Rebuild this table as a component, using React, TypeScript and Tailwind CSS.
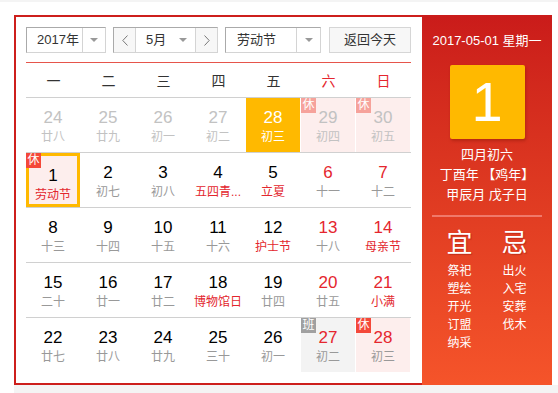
type Day = {
  d: number
  l: string
  muted?: boolean
  fest?: boolean
  tag?: '休' | '班'
  sel?: boolean
  today?: boolean
}

const weeks: Day[][] = [
  [
    { d: 24, l: '廿八', muted: true },
    { d: 25, l: '廿九', muted: true },
    { d: 26, l: '初一', muted: true },
    { d: 27, l: '初二', muted: true },
    { d: 28, l: '初三', sel: true },
    { d: 29, l: '初四', muted: true, tag: '休' },
    { d: 30, l: '初五', muted: true, tag: '休' },
  ],
  [
    { d: 1, l: '劳动节', fest: true, tag: '休', today: true },
    { d: 2, l: '初七' },
    { d: 3, l: '初八' },
    { d: 4, l: '五四青...', fest: true },
    { d: 5, l: '立夏', fest: true },
    { d: 6, l: '十一' },
    { d: 7, l: '十二' },
  ],
  [
    { d: 8, l: '十三' },
    { d: 9, l: '十四' },
    { d: 10, l: '十五' },
    { d: 11, l: '十六' },
    { d: 12, l: '护士节', fest: true },
    { d: 13, l: '十八' },
    { d: 14, l: '母亲节', fest: true },
  ],
  [
    { d: 15, l: '二十' },
    { d: 16, l: '廿一' },
    { d: 17, l: '廿二' },
    { d: 18, l: '博物馆日', fest: true },
    { d: 19, l: '廿四' },
    { d: 20, l: '廿五' },
    { d: 21, l: '小满', fest: true },
  ],
  [
    { d: 22, l: '廿七' },
    { d: 23, l: '廿八' },
    { d: 24, l: '廿九' },
    { d: 25, l: '三十' },
    { d: 26, l: '初一' },
    { d: 27, l: '初二', tag: '班' },
    { d: 28, l: '初三', tag: '休' },
  ],
]

const weekdays = ['一', '二', '三', '四', '五', '六', '日']

const good = ['祭祀', '塑绘', '开光', '订盟', '纳采']
const bad = ['出火', '入宅', '安葬', '伐木']

function Caret() {
  return (
    <svg width="8" height="4" viewBox="0 0 8 4">
      <path d="M0 0h8L4 4z" fill="#999" />
    </svg>
  )
}

function Chevron({ dir }: { dir: 'l' | 'r' }) {
  return (
    <svg width="6" height="11" viewBox="0 0 6 11">
      <path
        d={dir === 'l' ? 'M5.5 0.5L0.8 5.5l4.7 5' : 'M0.5 0.5l4.7 5-4.7 5'}
        fill="none"
        stroke="#777"
        strokeWidth="1"
      />
    </svg>
  )
}

function Cell({ day, col }: { day: Day; col: number }) {
  const weekend = col >= 5
  let box = ''
  if (day.sel) box = 'bg-[#ffb900]'
  else if (day.today) box = 'bg-[#fdeeed] border-[3px] border-[#ffb900] pt-[7px]'
  else if (day.tag === '休') box = 'bg-[#fdeeed]'
  else if (day.tag === '班') box = 'bg-[#f3f3f3]'

  let num = 'text-black'
  if (day.sel) num = 'text-white'
  else if (day.muted) num = 'text-[#c2c2c2]'
  else if (weekend) num = 'text-[#e5262e]'

  let lunar = 'text-[#999]'
  if (day.sel) lunar = 'text-white'
  else if (day.muted) lunar = 'text-[#c2c2c2]'
  else if (day.fest) lunar = 'text-[#e3262d]'

  let badge = 'bg-[#f4483a]'
  if (day.tag === '班') badge = 'bg-[#a0a0a0]'
  else if (day.muted) badge = 'bg-[#f6a29b]'

  return (
    <div className="w-[55px] h-[54px]">
      <div className="relative w-[54px] h-[54px]">
        <div className={`w-full h-full flex flex-col items-center pt-[10px] ${box}`}>
          <div className={`text-[17px] leading-[20px] ${num}`}>{day.d}</div>
          <div className={`mt-[1px] text-[12px] leading-[16px] whitespace-nowrap ${lunar}`}>{day.l}</div>
        </div>
        {day.tag && (
          <div className={`absolute top-0 left-0 w-[15px] h-[15px] text-[12px] leading-[15px] text-center text-white ${badge}`}>
            {day.tag}
          </div>
        )}
      </div>
    </div>
  )
}

export default function App() {
  return (
    <div
      className="w-[558px] h-[393px] bg-white overflow-hidden"
      style={{ fontFamily: '"Liberation Sans", "Noto Sans CJK SC", sans-serif' }}
    >
      <div className="h-[2px] bg-[#f4f4f4]" />
      <div className="ml-[14px] mt-[13px] flex">
        {/* calendar */}
        <div className="w-[408px] h-[370px] border-2 border-r-0 border-[#cd1f1c] pl-[10px] pt-[10px]">
          <div className="flex items-center h-[26px] text-[13px] text-[#333]">
            <div className="flex w-[80px] h-[26px] border border-[#aaa] border-r-[#d4d4d4] border-b-[#d4d4d4]">
              <div className="w-[55px] pl-[10px] flex items-center">2017年</div>
              <div className="flex-1 flex items-center justify-center border-l border-[#d4d4d4]">
                <Caret />
              </div>
            </div>
            <div className="ml-[7px] flex w-[105px] h-[26px] border border-[#aaa] border-r-[#d4d4d4] border-b-[#d4d4d4]">
              <div className="w-[22px] flex items-center justify-center bg-[#f7f7f7] border-r border-[#d4d4d4]">
                <Chevron dir="l" />
              </div>
              <div className="flex-1 flex items-center pl-[10px] pr-[8px] justify-between">
                <span>5月</span>
                <Caret />
              </div>
              <div className="w-[22px] flex items-center justify-center bg-[#f7f7f7] border-l border-[#d4d4d4]">
                <Chevron dir="r" />
              </div>
            </div>
            <div className="ml-[7px] flex w-[96px] h-[26px] border border-[#aaa] border-r-[#d4d4d4] border-b-[#d4d4d4]">
              <div className="w-[70px] pl-[11px] flex items-center">劳动节</div>
              <div className="flex-1 flex items-center justify-center border-l border-[#d4d4d4]">
                <Caret />
              </div>
            </div>
            <div className="ml-[8px] w-[82px] h-[26px] flex items-center justify-center bg-[#f7f7f7] border border-[#d6d6d6]">
              返回今天
            </div>
          </div>

          <div className="mt-[9px] w-[385px] h-[36px] pt-[2px] grid grid-cols-7 items-center border-t border-b border-t-[#e6554b] border-b-[#d0d0d0] text-[14px]">
            {weekdays.map((w, i) => (
              <div key={w} className={`text-center ${i >= 5 ? 'text-[#e5262e]' : 'text-[#333]'}`}>
                {w}
              </div>
            ))}
          </div>

          {weeks.map((week, r) => (
            <div
              key={r}
              className={`w-[385px] flex ${r < weeks.length - 1 ? 'h-[55px] border-b border-[#d0d0d0]' : 'h-[54px]'}`}
            >
              {week.map((day, c) => (
                <Cell key={c} day={day} col={c} />
              ))}
            </div>
          ))}
        </div>

        {/* almanac */}
        <div className="w-[130px] h-[370px] bg-gradient-to-b from-[#ca1b1a] to-[#f5542a] text-white flex flex-col items-center pt-[16px]">
          <div className="text-[13px] leading-[20px]">2017-05-01 星期一</div>
          <div className="mt-[14px] w-[75px] h-[74px] rounded-[2px] bg-[#ffb900] shadow-[1px_2px_3px_rgba(120,20,0,0.35)] flex items-center justify-center text-[56px] leading-none">
            1
          </div>
          <div className="mt-[6px] text-[13px] leading-[20px] text-center">
            <div>四月初六</div>
            <div>丁酉年 【鸡年】</div>
            <div>甲辰月 戊子日</div>
          </div>
          <div className="mt-[10px] w-[110px] h-[2px] bg-[#f0796a]" />
          <div className="mt-[11px] w-[110px] grid grid-cols-2 text-center">
            <div>
              <div className="text-[26px] leading-[30px] [text-shadow:1px_1px_1px_rgba(120,0,0,0.35)]">宜</div>
              <div className="mt-[4px] text-[12px] leading-[18px]">
                {good.map(g => (
                  <div key={g}>{g}</div>
                ))}
              </div>
            </div>
            <div>
              <div className="text-[26px] leading-[30px] [text-shadow:1px_1px_1px_rgba(120,0,0,0.35)]">忌</div>
              <div className="mt-[4px] text-[12px] leading-[18px]">
                {bad.map(g => (
                  <div key={g}>{g}</div>
                ))}
              </div>
            </div>
          </div>
        </div>
      </div>
      <div className="ml-[14px] h-[8px] bg-[#f4f4f4]" />
    </div>
  )
}
